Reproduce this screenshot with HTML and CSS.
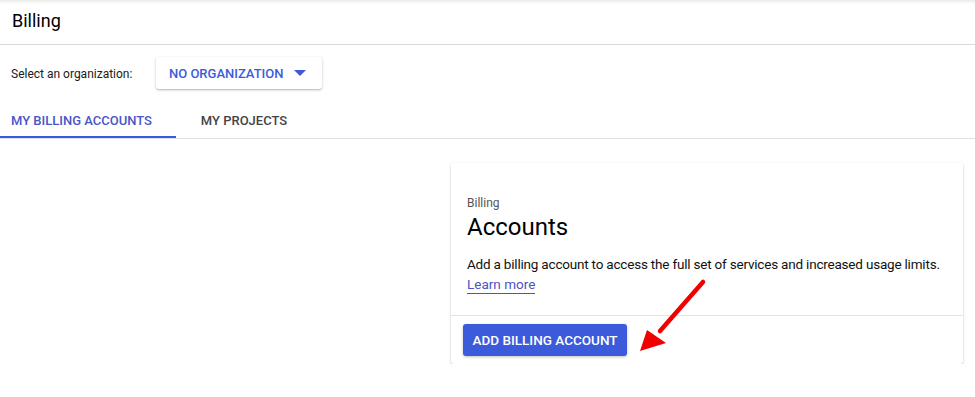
FILE: index.html
```html
<!DOCTYPE html>
<html>
<head>
<meta charset="utf-8">
<link rel="stylesheet" href="styles.css">
</head>
<body>
<header class="topbar"><h1 class="title">Billing</h1></header>
<div class="org-row">
  <span class="org-label">Select an organization:</span>
  <button class="org-select">NO ORGANIZATION<svg class="caret" width="12" height="6" viewBox="0 0 12 6"><path d="M0 0h12L6 6z" fill="#3b5bdb"/></svg></button>
</div>
<nav class="tabs">
  <div class="tab active">MY BILLING ACCOUNTS</div>
  <div class="tab">MY PROJECTS</div>
</nav>
<main class="content">
  <section class="card">
    <div class="card-body">
      <div class="eyebrow">Billing</div>
      <h2 class="card-title">Accounts</h2>
      <p class="desc">Add a billing account to access the full set of services and increased usage limits.</p>
      <a class="learn" href="#">Learn more</a>
    </div>
    <div class="card-actions">
      <button class="primary">ADD BILLING ACCOUNT</button>
    </div>
  </section>
  <svg class="arrow" width="80" height="80" viewBox="0 0 80 80">
    <line x1="63" y1="11" x2="20" y2="60" stroke="#f20000" stroke-width="4.5" stroke-linecap="round"/>
    <polygon points="0,80 7,59 26,72" fill="#f20000"/>
  </svg>
</main>
</body>
</html>
```
FILE: styles.css
```css
* { box-sizing: border-box; }
body {
  margin: 0;
  font-family: Roboto, "Liberation Sans", Arial, sans-serif;
  color: #212121;
  background: #fff;
}
.topbar {
  height: 45px;
  border-bottom: 1px solid #dadada;
  display: flex;
  align-items: center;
  padding: 0 12px;
  box-shadow: inset 0 4px 4px -3px rgba(0,0,0,0.12);
}
.title {
  margin: 0;
  font-size: 18px;
  font-weight: 400;
  color: #000;
  position: relative;
  top: -2px;
}
.org-row {
  display: flex;
  align-items: center;
  height: 56px;
  padding: 0 11px;
}
.org-label {
  font-size: 12px;
  color: #202020;
  width: 145px;
  position: relative;
  top: 1px;
}
.org-select {
  height: 32px;
  width: 166px;
  border: none;
  border-radius: 3px;
  background: #fff;
  box-shadow: 0 1px 3px rgba(0,0,0,0.22), 0 1px 1px rgba(0,0,0,0.1);
  font-family: inherit;
  font-size: 13px;
  font-weight: 500;
  color: #3b5bdb;
  display: flex;
  align-items: center;
  padding: 0 0 0 13px;
  gap: 11px;
}
.caret { display: block; }
.tabs {
  display: flex;
  height: 38px;
  border-bottom: 1px solid #e0e0e0;
}
.tab {
  font-size: 13px;
  font-weight: 500;
  color: #444;
  padding: 12px 0 0;
  text-align: center;
  width: 136px;
}
.tab.active {
  width: 176px;
  color: #4a55c9;
  border-bottom: 2px solid #3b5bdb;
  text-align: left;
  padding-left: 11px;
}
.content {
  display: flex;
  justify-content: flex-end;
  padding: 24px 12px 0 0;
  position: relative;
}
.card {
  width: 512px;
  border-radius: 3px;
  background: #fff;
  box-shadow: 0 1px 3px rgba(0,0,0,0.2), 0 1px 1px rgba(0,0,0,0.08);
}
.card-body {
  padding: 33px 16px 21px;
  border-bottom: 1px solid #e3e3e3;
}
.eyebrow {
  font-size: 12px;
  color: #555;
  line-height: 14px;
}
.card-title {
  margin: 2px 0 0;
  font-size: 24px;
  font-weight: 400;
  color: #000;
  line-height: 30px;
}
.desc {
  margin: 12px 0 0;
  font-size: 13.5px;
  line-height: 20px;
  color: #111;
  white-space: nowrap;
  letter-spacing: -0.2px;
}
.learn {
  font-size: 13.5px;
  color: #4a55c9;
  text-decoration: none;
  border-bottom: 1px solid #4a55c9;
  line-height: 18px;
  display: inline-block;
}
.card-actions {
  padding: 8px 12px 8px;
}
.primary {
  height: 32px;
  width: 164px;
  border: none;
  border-radius: 3px;
  background: #3b5bdb;
  color: #fff;
  font-family: inherit;
  font-size: 13.5px;
  font-weight: 500;
  box-shadow: 0 1px 3px rgba(0,0,0,0.25);
}
.arrow {
  position: absolute;
  left: 640px;
  top: 132px;
  overflow: visible;
}
```
